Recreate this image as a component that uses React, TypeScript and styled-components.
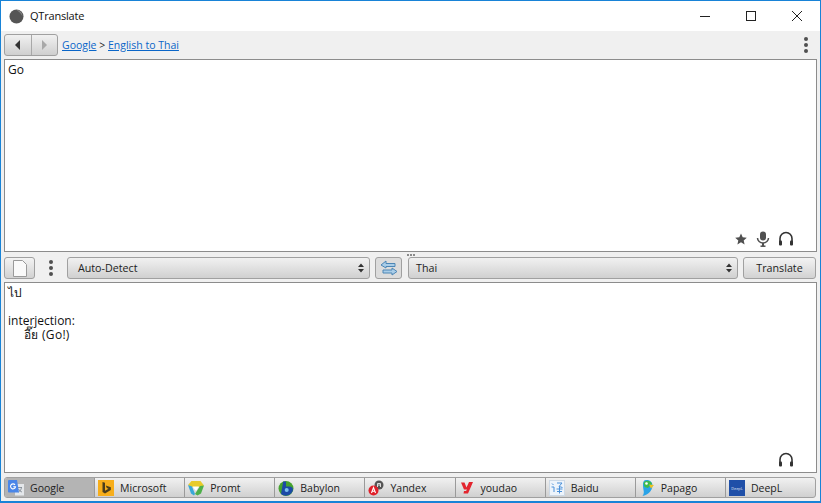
import React, { FC, ReactNode } from 'react'
import styled, { createGlobalStyle } from 'styled-components'

const GlobalStyle = createGlobalStyle`
	html, body {
		margin: 0;
		padding: 0;
		background: #fff;
	}
	body {
		font-family: "Open Sans", "Noto Sans", sans-serif;
		font-size: 12px;
		color: #1a1a1a;
	}
`

const Window = styled.div`
	box-sizing: border-box;
	width: 821px;
	height: 503px;
	display: flex;
	flex-direction: column;
	background: #f0f0f0;
	border: 1px solid #1883d7;
	border-bottom-width: 2px;
	overflow: hidden;
`

const TitleBar = styled.div`
	height: 30px;
	flex: none;
	display: flex;
	align-items: center;
	background: #fff;
	padding-left: 8px;
`

const AppTitle = styled.span`
	margin-left: 6px;
	padding-bottom: 2px;
	font-size: 11px;
	letter-spacing: -0.2px;
	color: #111;
	flex: 1;
`

const WindowButton = styled.div`
	width: 46px;
	height: 30px;
	display: flex;
	align-items: center;
	justify-content: center;
`

const TopBar = styled.div`
	height: 28px;
	flex: none;
	box-sizing: border-box;
	display: flex;
	align-items: center;
	padding: 0 6px 1px 3px;
`

const NavGroup = styled.div`
	display: flex;
	height: 22px;
	box-sizing: border-box;
	border: 1px solid #a0a0a0;
	border-radius: 3px;
	overflow: hidden;
	background: linear-gradient(#f1f1f1, #cfcfcf);
`

const NavButton = styled.div<{ $first?: boolean }>`
	width: 25.5px;
	display: flex;
	align-items: center;
	justify-content: center;
	border-right: ${p => (p.$first ? '1px solid #a8a8a8' : 'none')};
`

const Crumbs = styled.div`
	margin-left: 4px;
	font-size: 10.5px;
	flex: 1;
	color: #222;
`

const CrumbLink = styled.a`
	color: #0a66c8;
	text-decoration: underline;
`

const MenuDots = styled.div<{ $width?: number }>`
	width: ${p => p.$width ?? 16}px;
	min-height: 22px;
	display: flex;
	flex-direction: column;
	align-items: center;
	justify-content: center;
	gap: 2px;
	flex: none;

	i {
		display: block;
		width: 4px;
		height: 4px;
		border-radius: 50%;
		background: #505050;
	}
`

const Pane = styled.div<{ $height: number }>`
	height: ${p => p.$height}px;
	flex: none;
	box-sizing: border-box;
	margin: 0 3px;
	display: flex;
	flex-direction: column;
	background: #fff;
	border: 1px solid #8c8c8c;
	padding: 3px 3px 2px 3px;
`

const PaneText = styled.div`
	flex: 1;
	font-size: 12px;
	line-height: 14px;
	color: #111;
`

const Indented = styled.div`
	padding-left: 16px;
	letter-spacing: 0.3px;
`

const PaneIcons = styled.div`
	display: flex;
	justify-content: flex-end;
	align-items: center;
	gap: 5px;
	padding-right: 18px;
	height: 20px;
`

const Splitter = styled.div`
	height: 5px;
	flex: none;
	display: flex;
	justify-content: center;
	align-items: center;
	gap: 1px;

	i {
		width: 2px;
		height: 2px;
		background: #8a8a8a;
	}
`

const MiddleBar = styled.div`
	height: 25px;
	flex: none;
	display: flex;
	align-items: flex-start;
	padding: 0 4px 0 3px;
`

const ToolButton = styled.div<{ $width: number; $pressed?: boolean }>`
	box-sizing: border-box;
	width: ${p => p.$width}px;
	height: 22px;
	flex: none;
	display: flex;
	align-items: center;
	justify-content: center;
	border: 1px solid #a0a0a0;
	border-radius: 3px;
	font-size: 10.7px;
	color: #222;
	background: ${p => (p.$pressed ? '#dcdcdc' : 'linear-gradient(#f3f3f3, #d2d2d2)')};
`

const Select = styled.div<{ $width: number; $inset: number }>`
	box-sizing: border-box;
	width: ${p => p.$width}px;
	height: 22px;
	flex: none;
	display: flex;
	align-items: center;
	justify-content: space-between;
	padding: 0 4px 0 ${p => p.$inset}px;
	border: 1px solid #a0a0a0;
	border-radius: 3px;
	font-size: 10.7px;
	color: #222;
	background: linear-gradient(#f1f1f1, #d0d0d0);
`

const TabRow = styled.div`
	height: 21px;
	flex: none;
	margin: 4px 4px 3px 3px;
	display: flex;
	box-sizing: border-box;
	border: 1px solid #a0a0a0;
	border-radius: 3px;
	overflow: hidden;
	background: linear-gradient(#f1f1f1, #d0d0d0);
`

const Tab = styled.div<{ $active?: boolean }>`
	flex: 1;
	min-width: 0;
	display: flex;
	align-items: center;
	padding-left: 1px;
	gap: 6px;
	font-size: 10.5px;
	color: #222;
	border-right: 1px solid #9a9a9a;
	background: ${p => (p.$active ? '#b4b4b4' : 'transparent')};

	&:last-child {
		border-right: none;
	}
`

const TabIcon = styled.svg`
	flex: none;
	margin-left: 2px;
	width: 16px;
	height: 16px;
`

const Gap = styled.div<{ $width: number }>`
	width: ${p => p.$width}px;
	flex: none;
`

const Dots: FC<{ width?: number }> = ({ width }) => (
	<MenuDots $width={width}><i /><i /><i /></MenuDots>
)

const Star = () => (
	<svg width="16" height="16" viewBox="0 0 16 16">
		<path d="M8 2.500l1.700 3.800 4.100.4-3.100 2.700.9 4L8 11.300l-3.600 2.100.9-4-3.100-2.700 4.100-.4z" fill="#505050" />
	</svg>
)

const Mic = () => (
	<svg width="18" height="18" viewBox="0 0 18 18">
		<rect x="6" y="1.500" width="6" height="9" rx="3" fill="#505050" />
		<path d="M3.500 8a5.500 5 0 0 0 11 0" fill="none" stroke="#505050" strokeWidth="1.500" />
		<path d="M9 13v3" stroke="#505050" strokeWidth="2" />
		<path d="M6.500 16.200h5" stroke="#505050" strokeWidth="1.500" />
	</svg>
)

const Headphones = () => (
	<svg width="18" height="18" viewBox="0 0 18 18">
		<path d="M3 14V8.500a6 6 0 0 1 12 0V14" fill="none" stroke="#333" strokeWidth="1.600" />
		<rect x="2" y="10.500" width="3" height="5" rx="1" fill="#333" />
		<rect x="13" y="10.500" width="3" height="5" rx="1" fill="#333" />
	</svg>
)

const SortArrows = () => (
	<svg width="8" height="12" viewBox="0 0 8 12">
		<path d="M4 1.500L7 5H1z M4 10.500L1 7h6z" fill="#333" />
	</svg>
)

const icons: Record<string, ReactNode> = {
	Google: (
		<>
			<rect x="7" y="4" width="9" height="11.500" fill="#e4e7ea" />
			<path d="M9.500 7.500h4.500M10.500 12c1.800-1 2.700-2.500 3-4.500M10.500 9c.8 1.500 2 2.500 3.500 3" stroke="#77818c" strokeWidth=".8" fill="none" />
			<path d="M0 1a1 1 0 0 1 1-1h8l2 12.500H1a1 1 0 0 1-1-1z" fill="#4a86e8" />
			<path d="M7 4.800a2.500 2.500 0 1 0 .5 2H5.200" fill="none" stroke="#fff" strokeWidth="1.100" />
		</>
	),
	Microsoft: (
		<>
			<rect width="16" height="16" fill="#f7ae1b" />
			<path d="M4.500 2l2.500.8v8l3.500-2L8.800 8l-1-2.500 5 1.800v2.600L7 13.500l-2.500-1.500z" fill="#4a3d1c" />
		</>
	),
	Promt: (
		<>
			<path d="M3.500 1h9L16 5.500 12.500 7h-9L0 5z" fill="#e8cb2c" />
			<path d="M0 5l4 1.500 3 7.500-1 1.500-3-2z" fill="#38a8d8" />
			<path d="M16 5.500l-3 8-3.500 2-2.500-1.500 5-8z" fill="#4eb04a" />
			<path d="M4.500 6.500h6.500L8 11z" fill="#fff" />
		</>
	),
	Babylon: (
		<>
			<circle cx="8" cy="8.500" r="7.500" fill="#46a32f" />
			<path d="M3 14A7.500 7.500 0 0 0 15 10c0-3-2-3.500-4.500-3.500H8V1.500H5.200z" fill="#1c4aa6" />
			<circle cx="8.700" cy="10" r="2" fill="#7cc0ee" />
		</>
	),
	Yandex: (
		<>
			<circle cx="11" cy="5" r="4.500" fill="#555" />
			<circle cx="5.500" cy="10.500" r="5" fill="#e0202a" />
			<path d="M3.500 13l2-5.500 2 5.500M4.300 11.300h2.400" stroke="#fff" strokeWidth="1.100" fill="none" />
			<path d="M9.500 7V3.500h3V7M9.500 5h3" stroke="#ddd" fill="none" />
		</>
	),
	youdao: <path d="M2 2.500h3.500l2 5 2.500-5.500H14l-5 11.500H4.500l.5-2.500h2L8 9.500H5z" fill="#e3252f" />,
	Baidu: (
		<>
			<rect x=".5" y=".5" width="15" height="15" fill="#eef4fb" stroke="#cdd9e6" />
			<path d="M3 3.500l1.500 1.500M2.500 7H5v5M8 3h5l-3 3.500L13.500 7.500M7.500 9h6M10.500 7v6.500M8 11.500h5" stroke="#4a90d9" fill="none" />
		</>
	),
	Papago: (
		<>
			<path d="M7 0c4 0 6.500 2 6.500 5.500 0 5-5 10-10 10.500 1.500-2 1.500-4 1-6C4 6.500 3 0 7 0z" fill="#2aa3e8" />
			<path d="M4.500 3C6 0 11 0 13 3.500L9 8 5.500 7z" fill="#3dbb4e" />
			<circle cx="7.500" cy="3.500" r="1.300" fill="#fff" />
			<path d="M10 4.500l5 .5-3 3.500z" fill="#f2c21b" />
		</>
	),
	DeepL: (
		<>
			<rect width="16" height="16" fill="#1f4fa8" />
			<text x="8" y="9.500" fontSize="3.800" fill="#e2eaf7" textAnchor="middle">DeepL</text>
		</>
	),
}

const services = ['Google', 'Microsoft', 'Promt', 'Babylon', 'Yandex', 'youdao', 'Baidu', 'Papago', 'DeepL']

export default function App() {
	return (
		<>
			<GlobalStyle />
			<Window>
				<TitleBar>
					<svg width="15" height="15" viewBox="0 0 15 15">
						<circle cx="7.500" cy="7.500" r="7" fill="#555" />
						<path d="M7.500 1a6.500 6.500 0 0 1 6 6.500c-1-2.500-3-4.500-6-6.500z" fill="#888" />
					</svg>
					<AppTitle>QTranslate</AppTitle>
					<WindowButton>
						<svg width="12" height="12" viewBox="0 0 12 12"><path d="M1 6.500h10" stroke="#222" /></svg>
					</WindowButton>
					<WindowButton>
						<svg width="12" height="12" viewBox="0 0 12 12"><rect x="1.500" y="1.500" width="9" height="9" fill="none" stroke="#222" /></svg>
					</WindowButton>
					<WindowButton>
						<svg width="12" height="12" viewBox="0 0 12 12"><path d="M1 1l10 10M11 1L1 11" stroke="#222" /></svg>
					</WindowButton>
				</TitleBar>

				<TopBar>
					<NavGroup>
						<NavButton $first>
							<svg width="8" height="10" viewBox="0 0 8 10"><path d="M6 0v10L1 5z" fill="#333" /></svg>
						</NavButton>
						<NavButton>
							<svg width="8" height="10" viewBox="0 0 8 10"><path d="M2 0v10l5-5z" fill="#a8a8a8" /></svg>
						</NavButton>
					</NavGroup>
					<Crumbs>
						<CrumbLink>Google</CrumbLink> &gt; <CrumbLink>English to Thai</CrumbLink>
					</Crumbs>
					<Dots />
				</TopBar>

				<Pane $height={193}>
					<PaneText>Go</PaneText>
					<PaneIcons>
						<Star />
						<Mic />
						<Headphones />
					</PaneIcons>
				</Pane>

				<Splitter><i /><i /><i /></Splitter>

				<MiddleBar>
					<ToolButton $width={31}>
						<svg width="14" height="17" viewBox="0 0 14 17">
							<path d="M.5.500h9l4 4v12H.5z" fill="#fafafa" stroke="#9a9a9a" />
						</svg>
					</ToolButton>
					<Dots width={32} />
					<Select $width={303} $inset={10}>
						Auto-Detect
						<SortArrows />
					</Select>
					<Gap $width={5} />
					<ToolButton $width={27} $pressed>
						<svg width="20" height="18" viewBox="0 0 20 18">
							<path d="M7 2L2 6l5 3V7.500h9v-3H7z" fill="#a9cde8" stroke="#4d86b5" />
							<path d="M13 9l5 3.500-5 3.500v-2H4v-3h9z" fill="#a9cde8" stroke="#4d86b5" />
						</svg>
					</ToolButton>
					<Gap $width={6} />
					<Select $width={330} $inset={7}>
						Thai
						<SortArrows />
					</Select>
					<Gap $width={5} />
					<ToolButton $width={73}>Translate</ToolButton>
				</MiddleBar>

				<Pane $height={191}>
					<PaneText>
						<div lang="th">ไป</div>
						<br />
						<div>interjection:</div>
						<Indented lang="th">อี๊ย (Go!)</Indented>
					</PaneText>
					<PaneIcons>
						<Headphones />
					</PaneIcons>
				</Pane>

				<TabRow>
					{services.map((name, i) => (
						<Tab key={name} $active={i === 0}>
							<TabIcon viewBox="0 0 16 16">{icons[name]}</TabIcon>
							{name}
						</Tab>
					))}
				</TabRow>
			</Window>
		</>
	)
}
